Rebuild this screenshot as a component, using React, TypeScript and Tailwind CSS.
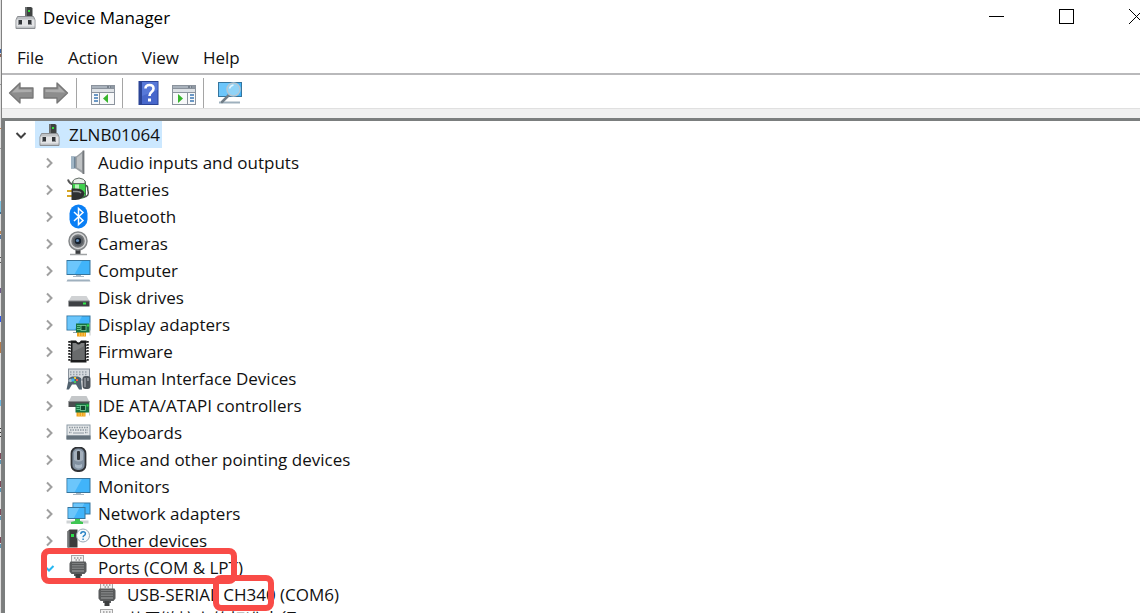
import React, { useState } from 'react'

const MachineIcon = () => (
  <svg width="25" height="25" viewBox="0 0 25 25" className="shrink-0">
    <path d="M11 2h6l1.500 1v10h-7.500z" fill="#3f4242" />
    <path d="M11 2h2v11h-2z" fill="#6d7070" />
    <rect x="14" y="5" width="2" height="2" fill="#31e03a" />
    <path d="M3.500 11.500h16l1.500 3.500v8.500h-19v-8.500z" fill="#bfc2c5" stroke="#8b8e92" />
    <path d="M2.500 14.500h18v7h-18z" fill="#e3e4e6" />
    <rect x="4" y="15" width="4" height="5" fill="#8b8e92" />
    <rect x="14" y="15" width="4" height="5" fill="#8b8e92" />
    <rect x="5" y="15" width="3" height="4" fill="#33363a" />
    <rect x="14" y="15" width="3" height="4" fill="#33363a" />
  </svg>
)

const Screen = ({ x, y, w, h }: { x: number; y: number; w: number; h: number }) => (
  <>
    <rect x={x} y={y} width={w} height={h} fill="#36759d" />
    <rect x={x + 1} y={y + 1} width={w - 2} height={h - 2} fill="#41b4fa" />
    <path d={`M${x + 1} ${y + 1}h${w * 0.6}l${-w * 0.3} ${h - 2}h${-w * 0.3}z`} fill="#6cc6fb" />
  </>
)

const Board = ({ x, y }: { x: number; y: number }) => (
  <>
    <rect x={x + 1} y={y + 8} width="9" height="5" fill="#f0a21c" />
    <path d={`M${x + 3.5} ${y + 9}v4M${x + 6} ${y + 9}v4M${x + 8.5} ${y + 9}v4`} stroke="#fbd06b" strokeWidth="0.8" />
    <rect x={x} y={y} width="14" height="9" fill="#187442" />
    <path d={`M${x + 1} ${y + 2}h4M${x + 1} ${y + 4}h3M${x + 1} ${y + 6}h4`} stroke="#5fc08a" />
    <rect x={x + 5} y={y + 2} width="5" height="5" fill="#12482f" stroke="#7fd2a0" strokeWidth="0.8" />
    <rect x={x + 11} y={y + 1} width="2" height="2" fill="#2be04b" />
    <rect x={x + 13.5} y={y - 1} width="1" height="13" fill="#c3cac9" />
  </>
)

const SerialIcon = () => (
  <svg width="25" height="25" viewBox="0 0 25 25" className="shrink-0">
    <rect x="5.500" y="0.500" width="12" height="7" fill="#f1f1f1" stroke="#a5a5a5" />
    <path d="M8 3h1.500M11 3h1.500M14 3h1.500M9.500 5h1.500M12.500 5h1.500" stroke="#6d6d6d" />
    <path d="M3.500 8.500l1-2h15l1 2v8l-2 2.500h-2.500v2h-8v-2h-2.500l-2-2.500z" fill="#595b5c" />
    <rect x="6" y="8" width="12" height="9" fill="#7c7e7f" />
    <path d="M6 9.500h12M6 12h12M6 14.500h12" stroke="#57595a" />
    <rect x="9.500" y="19" width="5" height="5" fill="#3c3e3f" />
  </svg>
)

const icons: Record<string, React.ReactNode> = {
  audio: (
    <>
      <path d="M5 6.500h6v12h-6z" fill="#6e8598" />
      <path d="M5 6.500h3v12h-3z" fill="#a0b5c5" />
      <path d="M9.500 7L17.500 0.500v23.500L9.500 18.500z" fill="#9b9fa3" />
      <path d="M11 7.500L16 3.500v17l-5-3z" fill="#bfc2c4" />
      <path d="M17.500 0.500v23.500" stroke="#74787c" strokeWidth="1.800" />
    </>
  ),
  battery: (
    <>
      <path d="M2 2.500c1 4 3 5 7 5" stroke="#555" strokeWidth="2" fill="none" />
      <rect x="6.500" y="3" width="13" height="18" rx="3" fill="#3fd04c" stroke="#3b7f46" />
      <path d="M7 6.500V4q0-2 6-3q5.500 1 6 3v2.500z" fill="#e9eeea" stroke="#626b65" />
      <rect x="9" y="7.500" width="4" height="6" fill="#b6f4b9" />
      <path d="M17 20c5 0 6-3 5-6s1-5-2.500-5.500" stroke="#4d4f50" strokeWidth="1.500" fill="none" />
      <path d="M1 14h6M1 19h6" stroke="#d6a525" strokeWidth="2.200" />
      <path d="M5.500 11.500h4q8 0 9 5q-1 6.500-9 6.500h-4z" fill="#2e3031" />
      <path d="M7 14.500h4q3 0 4 1.500" stroke="#8a8d8f" strokeWidth="1.500" fill="none" />
    </>
  ),
  bluetooth: (
    <>
      <rect x="3.500" y="0.500" width="18" height="24" rx="9" fill="#0a7ff5" />
      <path d="M8 8l9 8.500-4.500 4v-16l4.500 4L8 17" stroke="#fff" strokeWidth="1.500" fill="none" />
    </>
  ),
  camera: (
    <>
      <rect x="9.500" y="19" width="5" height="4" fill="#3b3d3f" />
      <path d="M4 23.500h17" stroke="#a1a4a6" strokeWidth="1.500" />
      <circle cx="12" cy="10" r="9" fill="#d5d6d7" stroke="#85888a" strokeWidth="1.500" />
      <circle cx="12" cy="10" r="6" fill="#5b6066" stroke="#74777a" strokeWidth="1.500" />
      <circle cx="12" cy="10" r="3.200" fill="#16202c" />
      <circle cx="11.500" cy="9.500" r="1.600" fill="#638cb8" />
    </>
  ),
  computer: (
    <>
      <Screen x={0.5} y={2} w={24} h={15} />
      <path d="M10 17h5v1h3v1h-11v-1h3z" fill="#aab7c2" />
      <path d="M1.500 21.500h22l1 2h-24z" fill="#9fb0be" />
    </>
  ),
  disk: (
    <>
      <path d="M5.500 11h15l3 5h-21z" fill="#d0d2d4" />
      <path d="M2.500 16h21v5.500h-21z" fill="#3e4144" />
      <path d="M2.500 16h21" stroke="#808386" />
      <rect x="17" y="17.500" width="3" height="2" fill="#30e94b" />
    </>
  ),
  display: (
    <>
      <Screen x={0.5} y={3.5} w={24} h={15} />
      <path d="M7 20h5v1h-5z" fill="#99a6b0" />
      <Board x={10} y={11.5} />
    </>
  ),
  firmware: (
    <>
      <path d="M4.500 1.500h5.500q2.500 4 5 0h5.500v22h-16z" fill="#1b1c1d" />
      <path d="M6.500 4h3.500q2.500 3 5 0h3.500v17h-12z" fill="#7d7f80" />
      <path d="M6.500 13l12-6v14h-12z" fill="#696b6c" />
      <path d="M3.500 2v21M21.500 2v21" stroke="#1f2021" strokeWidth="2.500" strokeDasharray="1.800 1.200" />
      <path d="M4.500 4v18M20.500 4v18" stroke="#e3e3e3" strokeWidth="1" strokeDasharray="1.500 1.500" />
    </>
  ),
  hid: (
    <>
      <rect x="2.500" y="3" width="21" height="11" fill="#d5dade" stroke="#87909a" />
      <path d="M4 6h18M4 8.500h18" stroke="#98a1aa" strokeWidth="1.300" strokeDasharray="1.500 1.500" />
      <path d="M3 12l3-1.500h6l3 1.500 1 11.500h-3l-3-5H6l-3 5H0.500z" fill="#50616e" />
      <circle cx="4.500" cy="14.500" r="1.700" fill="#a6b8c4" />
      <rect x="8" y="11" width="2" height="2" fill="#f5cf35" />
      <rect x="5.500" y="12.500" width="3" height="3" fill="#3eafea" />
      <rect x="10" y="13" width="2" height="2" fill="#ef5c3e" />
      <rect x="8" y="15" width="2" height="2" fill="#49c85b" />
      <rect x="16.500" y="10" width="8" height="13" rx="3" fill="#4e555c" />
      <path d="M19 12v9M22 12v3" stroke="#b8bdc2" />
    </>
  ),
  ide: (
    <>
      <path d="M5.500 3h15l3 6h-21z" fill="#c4c7c9" />
      <path d="M2.500 8.500h21v5.500h-21z" fill="#4b4e50" />
      <path d="M2.500 8.500h21" stroke="#858789" />
      <Board x={9.5} y={10.5} />
    </>
  ),
  keyboard: (
    <>
      <rect x="0.500" y="4.500" width="24" height="15" fill="#8d9ba6" />
      <rect x="1.500" y="5.500" width="22" height="10" fill="#e5e8ea" />
      <path d="M3 7.500h19M4 10h18M3 12.500h3M19 12.500h3" stroke="#8e98a1" strokeWidth="1.300" strokeDasharray="1.500 1" />
      <path d="M7 13h11" stroke="#8e98a1" />
      <rect x="0.500" y="15.500" width="24" height="4" fill="#65727c" />
    </>
  ),
  mouse: (
    <>
      <rect x="5.500" y="0.500" width="14" height="23.500" rx="6" fill="#8190a0" stroke="#303236" strokeWidth="1.800" />
      <path d="M8 5q4-5 9 0v8q-4 3-9 0z" fill="#a5b0bc" />
      <path d="M9 17q3.500 2 7 0v3q-3 3-7 0z" fill="#a9b7c5" />
      <rect x="11" y="4" width="3" height="9" rx="1" fill="#323539" />
    </>
  ),
  monitor: (
    <>
      <Screen x={0.5} y={4} w={24} h={15} />
      <path d="M10 19h5v1h3v1h-11v-1h3z" fill="#aab7c2" />
    </>
  ),
  network: (
    <>
      <Screen x={6.5} y={1.5} w={18} h={12} />
      <path d="M0.500 19.500h22v3h-22z" fill="#cfd3d5" />
      <path d="M9 18h5v2l3 1v2h-12v-2l4-1z" fill="#3fc653" />
      <Screen x={1.5} y={6} w={18} h={12} />
    </>
  ),
  other: (
    <>
      <path d="M1.500 3.500l2-2h8v18h-10z" fill="#3a3c3d" />
      <path d="M1.500 3.500l2-1v17h-2z" fill="#75787a" />
      <rect x="5" y="6" width="3" height="3" fill="#2bdf4c" />
      <circle cx="17" cy="7.500" r="6.500" fill="#f5f9fc" stroke="#9aa9b5" />
      <path d="M14.800 6q0-2.300 2.300-2.300t2.300 2q0 1.300-1.600 2.100q-.7.500-.7 1.500M17.100 10.500v1.500" stroke="#2580c4" strokeWidth="1.400" fill="none" />
    </>
  ),
}

const categories = [
  { name: 'Audio inputs and outputs', icon: 'audio' },
  { name: 'Batteries', icon: 'battery' },
  { name: 'Bluetooth', icon: 'bluetooth' },
  { name: 'Cameras', icon: 'camera' },
  { name: 'Computer', icon: 'computer' },
  { name: 'Disk drives', icon: 'disk' },
  { name: 'Display adapters', icon: 'display' },
  { name: 'Firmware', icon: 'firmware' },
  { name: 'Human Interface Devices', icon: 'hid' },
  { name: 'IDE ATA/ATAPI controllers', icon: 'ide' },
  { name: 'Keyboards', icon: 'keyboard' },
  { name: 'Mice and other pointing devices', icon: 'mouse' },
  { name: 'Monitors', icon: 'monitor' },
  { name: 'Network adapters', icon: 'network' },
  { name: 'Other devices', icon: 'other' },
]

// slivers of the window behind: [y, height, color]
const slivers: [number, number, string][] = [
  [49, 4, '#3f67a5'],
  [54, 3, '#8b6257'],
  [84, 1, '#9a9a9a'],
  [128, 1, '#c58250'],
  [148, 1, '#9a9a9a'],
  [201, 11, '#7cc4e4'],
  [212, 2, '#3b6d93'],
  [231, 3, '#b98255'],
  [235, 4, '#50729e'],
  [257, 1, '#555'],
  [262, 1, '#555'],
  [288, 5, '#6e5b88'],
  [316, 6, '#2e56ea'],
  [342, 11, '#b37a4a'],
  [400, 6, '#6cb9e2'],
  [428, 1, '#333'],
  [432, 1, '#333'],
  [436, 1, '#333'],
  [453, 6, '#7c4a5a'],
  [460, 4, '#5b93b0'],
  [481, 6, '#7c4a5a'],
  [488, 4, '#5b93b0'],
  [509, 6, '#7c4a5a'],
  [516, 4, '#5b93b0'],
  [537, 6, '#7c4a5a'],
  [544, 4, '#5b93b0'],
]

const Arrow = ({ flip }: { flip?: boolean }) => (
  <svg width="26" height="26" viewBox="0 0 26 26" className={flip ? '-scale-x-100' : ''}>
    <path d="M1.500 13L12 3v5h13v10H12v5z" fill="#8d8d8d" stroke="#777" strokeWidth="1.300" strokeLinejoin="round" />
    <path d="M4 12.500L10.500 6v3.500h13v2.500z" fill="#adadad" />
  </svg>
)

const PanelIcon = ({ right }: { right?: boolean }) => (
  <svg width="26" height="26" viewBox="0 0 26 26">
    <rect x="1" y="5" width="24" height="20" fill="#8b939d" />
    <rect x="2" y="6" width="22" height="2" fill="#a9b2bc" />
    <path d="M17 7h2M20 7h1.500M22.500 7h1" stroke="#46505c" />
    <rect x="2" y="9" width="22" height="3" fill="#dde1e5" />
    <rect x="2" y="13" width="22" height="11" fill="#f8f9fa" />
    {right ? (
      <>
        <path d="M16.500 12v12" stroke="#8b939d" />
        <path d="M19 15h4M19 18h4M19 21h4" stroke="#3c78b4" strokeWidth="1.500" />
        <path d="M7 14v9l5-4.500z" fill="#37b52c" />
      </>
    ) : (
      <>
        <path d="M9.500 12v12" stroke="#8b939d" />
        <path d="M4 15h4M4 18h4M4 21h4" stroke="#3c78b4" strokeWidth="1.500" />
        <path d="M18 14v9l-5-4.500z" fill="#37b52c" />
      </>
    )}
  </svg>
)

const HelpIcon = () => (
  <svg width="26" height="26" viewBox="0 0 26 26">
    <rect x="2.500" y="1" width="20" height="24" fill="#2b4496" />
    <rect x="6" y="2" width="15.500" height="22" fill="#4767cb" />
    <path d="M6 2h15.500v8L6 16z" fill="#5778d8" />
    <path d="M9.500 8.500q0-3.500 4-3.500t4 3.500q0 2-2 3.500t-2 4" stroke="#fff" strokeWidth="2.600" fill="none" />
    <rect x="12" y="18.500" width="3" height="3" fill="#fff" />
  </svg>
)

const ScanIcon = () => (
  <svg width="26" height="26" viewBox="0 0 26 26">
    <Screen x={1} y={2} w={24} h={15} />
    <path d="M2 21.500h21v2H2z" fill="#9eb0bd" />
    <path d="M12.500 14.500L5 22" stroke="#727e88" strokeWidth="2.500" strokeLinecap="round" />
    <circle cx="16.500" cy="9.500" r="6.500" fill="#90d3f7" stroke="#b4c6d2" strokeWidth="1.500" />
    <path d="M12.500 8.500q1-3 4-3.500" stroke="#e5f6ff" strokeWidth="1.500" fill="none" />
  </svg>
)

const Chevron = ({ open, className }: { open?: boolean; className?: string }) => (
  <svg width="12" height="12" viewBox="0 0 12 12" fill="none" stroke="currentColor" strokeWidth="2" className={className}>
    {open ? <path d="M1.500 4L6 8.500 10.500 4" /> : <path d="M4 1.500L8.500 6 4 10.500" />}
  </svg>
)

const App: React.FC = () => {
  const [portsOpen, setPortsOpen] = useState(true)

  return (
    <div className="flex h-screen overflow-hidden bg-white font-['Open_Sans','Noto_Sans_CJK_SC',sans-serif] text-[17px] leading-6 text-[#111]">
      <div className="w-0.5 shrink-0 border-r border-[#808080] bg-[#e0e0e0]">
        <svg width="1" height="613">
          {slivers.map(([y, h, color]) => (
            <rect key={y} x="0" y={y} width="1" height={h} fill={color} />
          ))}
        </svg>
      </div>

      <div className="flex min-w-0 flex-1 flex-col">
        <header className="flex h-[35px] shrink-0 items-center pb-px pl-3">
          <MachineIcon />
          <h1 className="ml-1 flex-1 pt-px text-black">Device Manager</h1>
          <div className="-mr-[31px] flex h-[33px] shrink-0 self-start">
            <button aria-label="Minimize" className="flex w-[70px] items-center justify-center">
              <svg width="15" height="15" viewBox="0 0 15 15" stroke="#000">
                <path d="M0 7.500h15" />
              </svg>
            </button>
            <button aria-label="Maximize" className="flex w-[70px] items-center justify-center">
              <svg width="15" height="15" viewBox="0 0 15 15" stroke="#000" fill="none">
                <rect x="0.500" y="0.500" width="14" height="14" />
              </svg>
            </button>
            <button aria-label="Close" className="flex w-[70px] items-center justify-center">
              <svg width="15" height="15" viewBox="0 0 15 15" stroke="#000">
                <path d="M0 0l15 15M15 0L0 15" />
              </svg>
            </button>
          </div>
        </header>

        <nav className="flex h-[38px] shrink-0 gap-6 px-[15px] pt-[11px]">
          <button className="h-6">File</button>
          <button className="h-6">Action</button>
          <button className="h-6">View</button>
          <button className="h-6">Help</button>
        </nav>

        <div className="flex h-[35px] shrink-0 border-t-2 border-[#b9b9bb] pt-[3px]">
          <div className="flex items-center gap-[9px] border-r border-[#a5a5a5] pr-[7px] pl-1.5">
            <button aria-label="Back"><Arrow /></button>
            <button aria-label="Forward"><Arrow flip /></button>
          </div>
          <div className="flex items-center border-r border-[#a5a5a5] pr-1.5 pl-[13px]">
            <button aria-label="Show console tree"><PanelIcon /></button>
          </div>
          <div className="flex items-center gap-[9px] border-r border-[#a5a5a5] pr-1.5 pl-[13px]">
            <button aria-label="Help topics"><HelpIcon /></button>
            <button aria-label="Show action pane"><PanelIcon right /></button>
          </div>
          <div className="flex items-center pl-[13px]">
            <button aria-label="Scan for hardware changes"><ScanIcon /></button>
          </div>
        </div>
        <div className="h-[10px] shrink-0 border-t border-[#e0e0e0] bg-[#f0f0f0]" />

        <main className="min-h-0 flex-1 overflow-hidden border-t-3 border-l-3 border-[#7b7e7e]">
          <div className="flex h-7 items-start">
            <button aria-label="Collapse computer" className="ml-2.5 h-7 w-5">
              <Chevron open className="text-[#404040]" />
            </button>
            <span className="flex h-[27px] items-center gap-1.5 bg-[#cce8ff] pr-0.5 pl-[3px]">
              <MachineIcon />
              ZLNB01064
            </span>
          </div>

          <ul className="pl-[38px]">
            {categories.map((item) => (
              <li key={item.name} className="flex h-[27px] items-center">
                <button aria-label={`Expand ${item.name}`} className="w-[23px] shrink-0">
                  <Chevron className="text-[#a0a0a0]" />
                </button>
                <svg width="25" height="25" viewBox="0 0 25 25" className="mr-[7px] shrink-0">
                  {icons[item.icon]}
                </svg>
                {item.name}
              </li>
            ))}
            <li>
              <div className="relative flex h-[27px] items-center">
                <button
                  aria-label="Toggle ports"
                  className="w-[23px] shrink-0"
                  onClick={() => setPortsOpen(!portsOpen)}
                >
                  <Chevron open={portsOpen} className="text-[#25b7f2]" />
                </button>
                <SerialIcon />
                <span className="ml-[7px]">Ports (COM &amp; LPT)</span>
                <span className="absolute -top-1.5 -left-0.5 h-9 w-[196px] rounded-lg border-6 border-[#f94b47]" />
              </div>
              {portsOpen && (
                <ul className="pl-[52px]">
                  <li className="flex h-[27px] items-center">
                    <SerialIcon />
                    <span className="ml-[7px] whitespace-pre">
                      USB-SERIAL{' '}
                      <span className="relative">
                        CH340
                        <span className="absolute -top-2 -left-2.5 h-9 w-[61px] rounded-lg border-6 border-[#f94b47]" />
                      </span>{' '}
                      (COM6)
                    </span>
                  </li>
                  <li className="flex h-[27px] items-center">
                    <SerialIcon />
                    <span className="ml-[7px] pb-1">蓝牙链接上的标准串行 (COM3)</span>
                  </li>
                </ul>
              )}
            </li>
          </ul>
        </main>
      </div>
    </div>
  )
}

export default App
